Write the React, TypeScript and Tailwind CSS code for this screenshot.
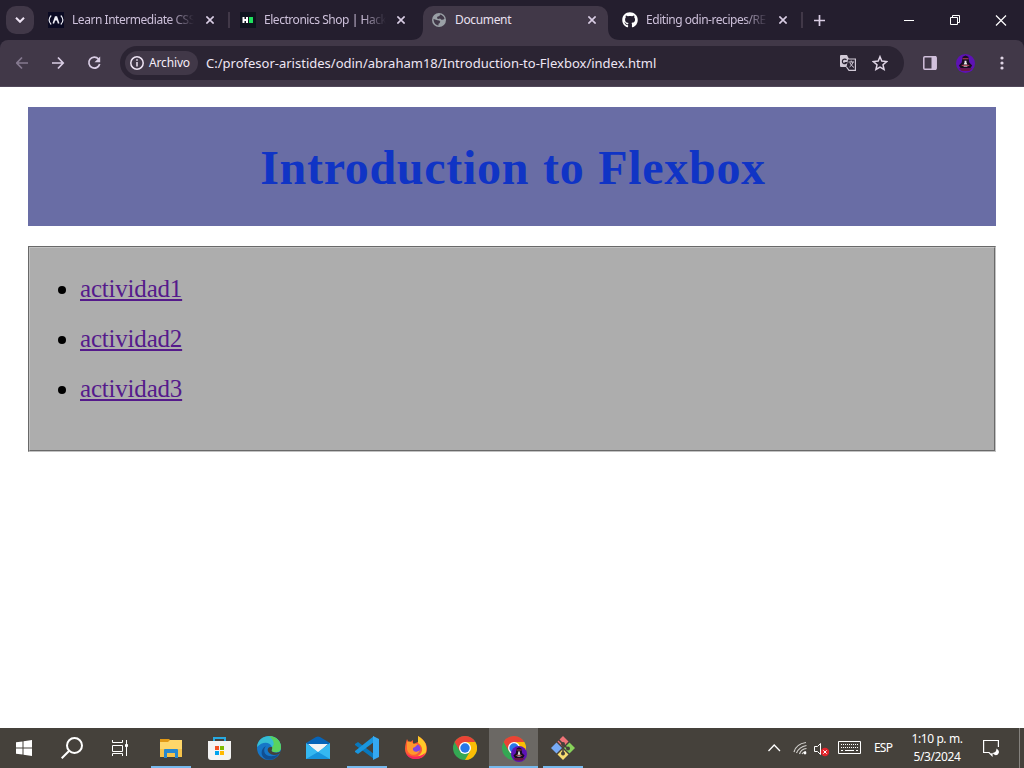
import React from "react";
import { FaGithub } from "react-icons/fa";

function Close() {
  return (
    <svg className="size-2 shrink-0" viewBox="0 0 8 8" stroke="#d9cde4" strokeWidth="1.6">
      <path d="M.4.4l7.2 7.2M7.6.4L.4 7.6" />
    </svg>
  );
}

function FreeCodeCamp() {
  return (
    <svg className="size-4 shrink-0" viewBox="0 0 16 16" fill="none" stroke="#eeeef6">
      <path fill="#0a0a23" stroke="none" d="M0 0h16v16H0z" />
      <path strokeWidth="1.1" d="M3.2 3.5Q-1 8 3.2 12.5M12.8 3.5q4.200 4.500 0 9" />
      <path strokeWidth="1.6" d="M5.300 11.500 7.500 5h1l2.200 6.500" />
      <path fill="#eeeef6" stroke="none" d="M6.500 7.500l1.500-3 1.500 3-.5 1H7z" />
    </svg>
  );
}

function HackerEarth() {
  return (
    <svg className="size-4 shrink-0" viewBox="0 0 16 16">
      <path fill="#0e141e" d="M0 0h16v16H0z" />
      <path fill="#fff" d="M2.500 5h2v2h1.500V5h2v6H6V9H4.500v2h-2z" />
      <path fill="#1ee15e" d="M9 5h4v6H9z" />
    </svg>
  );
}

function Globe() {
  return (
    <svg className="size-[14px] shrink-0" viewBox="0 0 14 14">
      <circle cx="7" cy="7" r="7" fill="#9aa0a6" />
      <path fill="#413848" d="M8 1.500q3.500.7 4.500 4.200-1 1.300-3 1.100L8 5.500 6.200 6 5 5.200l.3-1.500L7.500 3zM1.500 6l4 1.300 1.800.3 1 1.200-.8 1.500-1 .4v1.800C3.500 12 1.500 9.500 1.500 6z" />
    </svg>
  );
}

function TabBody({ icon, title, fade = true }: { icon: React.ReactNode; title: string; fade?: boolean }) {
  return (
    <>
      {icon}
      <span
        className={
          "w-[122px] shrink-0 overflow-hidden whitespace-nowrap text-[12px] leading-5 " +
          (fade
            ? "ml-2 tracking-[-0.46px] text-[#cdc0da] [mask-image:linear-gradient(to_right,black_80%,transparent)]"
            : "ml-[9px] tracking-[-0.35px] text-[#e9e0f0]")
        }
      >
        {title}
      </span>
    </>
  );
}

function TabStrip() {
  return (
    <div className="flex h-10 items-center bg-[#241e2e] pl-1.5">
      <div className="flex size-7 items-center justify-center rounded-[10px] bg-[#413848]">
        <svg className="h-[6px] w-[10px]" viewBox="0 0 10 6" fill="none" stroke="#eee4f4" strokeWidth="2">
          <path d="M1 .8l4 4 4-4" />
        </svg>
      </div>
      <div className="flex w-[195px] items-center pl-3.5">
        <TabBody icon={<FreeCodeCamp />} title="Learn Intermediate CSS" />
        <span className="ml-3"><Close /></span>
        <i className="ml-3.5 h-4 w-[2px] shrink-0 bg-[#413848]" />
      </div>
      <div className="flex w-[182px] items-center pl-[11px]">
        <TabBody icon={<HackerEarth />} title="Electronics Shop | Hack" />
        <span className="ml-[11px]"><Close /></span>
      </div>
      <svg className="h-10 w-3 shrink-0" viewBox="0 0 12 40"><path fill="#413848" d="M0 40Q12 40 12 28V40z" /></svg>
      <div className="flex h-[34px] w-[185px] items-center self-end rounded-t-[10px] bg-[#413848] pb-1.5 pl-[9px]">
        <TabBody icon={<Globe />} title="Document" fade={false} />
        <span className="ml-[11px]"><Close /></span>
      </div>
      <svg className="h-10 w-3 shrink-0" viewBox="0 0 12 40"><path fill="#413848" d="M12 40Q0 40 0 28V40z" /></svg>
      <div className="flex w-[184px] items-center pl-0.5">
        <FaGithub className="size-4 shrink-0 text-white" />
        <TabBody icon={null} title="Editing odin-recipes/RE" />
        <span className="ml-[11px]"><Close /></span>
        <i className="ml-3.5 h-4 w-[2px] shrink-0 bg-[#413848]" />
      </div>
      <svg className="ml-[10px] size-[11px] shrink-0" viewBox="0 0 11 11" stroke="#d9cde4" strokeWidth="1.700"><path d="M5.500 0v11M0 5.500h11" /></svg>
      <svg className="ml-[79px] h-3 w-[104px] shrink-0" viewBox="0 0 104 12" fill="none" stroke="#fff">
        <path d="M0 6.500h10M46.500 3.500h7v7h-7zM48.500 3.500v-2h7v7h-2" />
        <path strokeWidth="1.200" d="M92 1.500l10 10M102 1.500l-10 10" />
      </svg>
    </div>
  );
}

function Avatar({ className }: { className: string }) {
  return (
    <svg className={className} viewBox="0 0 20 20">
      <circle cx="10" cy="10" r="10" fill="#5d12b5" />
      <path fill="#180d20" d="M7 3l3-1.500L13 3l1 6 3 3-2 3H5l-2-3 3-3z" />
      <path fill="#6d1746" d="M3 15h14l-3 3H6z" />
      <path fill="#eee" d="M9 7h2v2l1 2h-4l1-2z" />
      <path stroke="#d25060" strokeWidth=".9" d="M6 12h8M7 5h6" />
      <path stroke="#ddd" strokeWidth=".8" d="M8 13h4" />
    </svg>
  );
}

function Toolbar() {
  return (
    <div className="bg-[#241e2e]">
      <div className="flex h-[47px] items-center rounded-t-[8px] border-b border-[#51485a] bg-[#413848]">
        <svg className="ml-4 h-[14px] w-[86px] shrink-0" viewBox="0 0 86 14" fill="none" strokeWidth="1.700">
          <path stroke="#85798f" d="M12 7H1M6 1.500L.8 7 6 12.500" />
          <path stroke="#d9cde4" d="M36 7h11M42 1.500L47.200 7 42 12.500M82.500 3A5.500 5.500 0 1 0 83.700 8" />
          <path fill="#d9cde4" d="M84.200.5v5.700h-5.700z" />
        </svg>
        <div className="ml-[18px] flex h-[34px] w-[784px] shrink-0 items-center rounded-full bg-[#2b2433] pl-[5px]">
          <div className="flex h-6 w-[73px] items-center rounded-full bg-[#413848] pl-[5px]">
            <svg className="size-[14px]" viewBox="0 0 14 14" fill="none" stroke="#eee4f4" strokeWidth="1.500">
              <circle cx="7" cy="7" r="6.200" />
              <path d="M7 6v4.500M7 3.200v1.500" />
            </svg>
            <span className="ml-[5px] text-[12px] leading-5 tracking-[-0.15px] text-[#f5edf9]">Archivo</span>
          </div>
          <span className="ml-2 w-[460px] whitespace-nowrap text-[13px] leading-5 text-[#eee6f3]">
            C:/profesor-aristides/odin/abraham18/Introduction-to-Flexbox/index.html
          </span>
          <svg className="ml-[174px] size-4 shrink-0" viewBox="0 0 16 16">
            <path fill="#d1c9d6" d="M1 0h6l2 4v8H1q-1 0-1-1V1q0-1 1-1z" />
            <path fill="none" stroke="#2b2433" strokeWidth="1.200" d="M6.500 5A2.300 2.300 0 1 0 6.700 7.500H4.500" />
            <path fill="#2b2433" stroke="#d1c9d6" strokeWidth="1.200" d="M8.200 4H15.400V15.400H9L6.500 12" />
            <path fill="none" stroke="#d1c9d6" d="M8.500 7h5.500M11.200 5.500V7M13 7q-.5 3-3.500 5M10 8q1.500 3 4 4.500" />
          </svg>
          <svg className="ml-4 size-4 shrink-0" viewBox="0 0 16 16" fill="none" stroke="#e0d6e6" strokeWidth="1.500">
            <path d="M8 1.700l1.800 4.400 4.900.5-3.700 3.200 1.100 4.700L8 12.100l-4.100 2.400L5 9.800 1.300 6.600l4.900-.5z" />
          </svg>
        </div>
        <svg className="ml-[19px] h-[14px] w-[14px] shrink-0" viewBox="0 0 14 14">
          <rect x=".8" y=".8" width="12.400" height="12.400" rx="1" fill="none" stroke="#d1c0dc" strokeWidth="1.500" />
          <path fill="#d1c0dc" d="M8.500 0H13v14H8.500z" />
        </svg>
        <Avatar className="ml-[19px] size-[19px] shrink-0" />
        <svg className="ml-[25px] h-[14px] w-[4px] shrink-0" viewBox="0 0 4 14" fill="#dfd5e5">
          <circle cx="2" cy="2" r="1.600" /><circle cx="2" cy="7" r="1.600" /><circle cx="2" cy="12" r="1.600" />
        </svg>
      </div>
    </div>
  );
}

function Page() {
  return (
    <main className="flex flex-1 flex-col gap-5 bg-white px-7 pt-5 font-['Liberation_Serif',serif]">
      <header className="flex h-[119px] items-center justify-center bg-[#696da5] pl-0.5 pt-px">
        <h1 className="whitespace-nowrap text-[48px] font-bold leading-[55px] tracking-[0.7px] [word-spacing:1.2px] text-[#1034c5]">Introduction to Flexbox</h1>
      </header>
      <nav className="h-[206px] border border-b-[#c2c2c2] border-l-[#696969] border-r-[#c2c2c2] border-t-[#696969]">
        <div className="h-full border border-b-[#696969] border-l-[#c2c2c2] border-r-[#696969] border-t-[#c2c2c2] bg-[#adadad] pt-4">
          <ul className="text-[25px]">
            {["actividad1", "actividad2", "actividad3"].map((name) => (
              <li key={name} className="flex h-[50px] items-center pl-7">
                <i className="mr-[14px] mt-px size-2 rounded-full bg-black" />
                <a className="leading-7 tracking-[-0.2px] text-[#551a8b] underline decoration-2 underline-offset-[2px]">{name}</a>
              </li>
            ))}
          </ul>
        </div>
      </nav>
    </main>
  );
}

function ChromeShapes() {
  return (
    <>
      <circle cx="12" cy="12" r="12" fill="#34a853" />
      <path fill="#ea4335" d="M1.600 6A12 12 0 0 1 22.400 6H12L6.800 15z" />
      <path fill="#fbbc05" d="M22.400 6A12 12 0 0 1 12 24L17.200 15 12 6z" />
      <circle cx="12" cy="12" r="6" fill="#fff" />
      <circle cx="12" cy="12" r="4.700" fill="#2777e8" />
    </>
  );
}

const apps: { name: string; state: string; art: React.ReactNode }[] = [
  {
    name: "files", state: "open", art: (
      <>
        <path fill="#e29a16" d="M1 3h9l2 2v4H1z" />
        <path fill="#ffd76a" d="M1 6h8l2-2h12v17H1z" />
        <path fill="#f6c34b" d="M1 13h22v8H1z" />
        <path fill="#2788cf" d="M5 14q0-1 1-1h12q1 0 1 1v8h-3v-5H8v5H5z" />
      </>
    ),
  },
  {
    name: "store", state: "", art: (
      <>
        <path fill="none" stroke="#27a9e1" strokeWidth="2" d="M6 6V2h11v4" />
        <path fill="#f3f3f3" d="M0 5h23v16q0 3-3 3H3q-3 0-3-3z" />
        <path fill="#f25022" d="M7 10h4v4H7z" /><path fill="#7fba00" d="M12 10h4v4h-4z" />
        <path fill="#00a4ef" d="M7 15h4v4H7z" /><path fill="#ffb900" d="M12 15h4v4h-4z" />
      </>
    ),
  },
  {
    name: "edge", state: "", art: (
      <>
        <circle cx="12" cy="12" r="12" fill="#1676c7" />
        <path fill="#35bdd3" d="M0 11C1-3 23-4 24 11c0 5-4 6-8 5-3-1 0-3-1-5C12 5 5 6 0 11z" />
        <path fill="#5ad35d" d="M12 0c7 0 12 5 12 11 0 5-4 6-8 5-3-1 0-3-1-5 3-2 2-7-3-11z" />
        <path fill="#114f91" d="M9 10c-5 6 1 14 13 8-5 8-15 7-17 1-1-3 0-7 4-9z" />
        <path fill="#45413b" d="M13 11c-4 1-3 7 4 8 3 0 5-1 6-2l1-2c-2 2-5 2-8 1-3-1 0-3-1-5z" />
      </>
    ),
  },
  {
    name: "mail", state: "", art: (
      <>
        <path fill="#0764b8" d="M0 7l10-6q2-1 4 0l10 6v8H0z" />
        <path fill="#f4f4f4" d="M2 8h20L12 17z" />
        <path fill="#35b8f1" d="M0 7l12 9 12-9v16H0z" />
        <path fill="#1793dc" d="M0 23l12-7 12 7z" />
      </>
    ),
  },
  {
    name: "code", state: "open", art: (
      <>
        <path fill="#0878bd" d="M0 8l3-2 16 12v5L0 9z" />
        <path fill="#1996df" d="M0 16l3 2L19 6V0L0 15z" />
        <path fill="#35a9f2" d="M18 0l6 3v18l-6 3z" />
      </>
    ),
  },
  {
    name: "firefox", state: "", art: (
      <>
        <path fill="#ff5b32" d="M3 3l2 4 4-3v4l5-2V0c5 3 9 7 9 13 0 6-5 10-11 10S1 19 1 13c0-4 1-7 2-10z" />
        <path fill="#ffc928" d="M14 0c8 5 9 9 8 16-2 4-5 5-8 4 6-4 5-10 0-13z" />
        <circle cx="11.500" cy="13" r="5" fill="#8045e4" />
        <path fill="#ff982d" d="M3 6c3-1 5 0 7 2h4l-3 3-2 1c-1 4 4 5 7 2-2 7-12 6-13-1z" />
        <path fill="#f62760" d="M2 17c5 5 13 5 19 0-3 8-16 8-19 0z" />
      </>
    ),
  },
  { name: "chrome", state: "", art: <ChromeShapes /> },
  { name: "profile", state: "active", art: <ChromeShapes /> },
  {
    name: "git", state: "git", art: (
      <>
        <path fill="#ef7377" d="M12 0l5.500 5.500-5.500 5.500-5.500-5.500z" />
        <path fill="#77aaf6" d="M5.500 6.500L11 12l-5.500 5.500L0 12z" />
        <path fill="#87d25a" d="M18.500 6.500L24 12l-5.500 5.500L13 12z" />
        <path fill="#f8dc70" d="M12 13l5.500 5.500L12 24l-5.500-5.500z" />
        <path fill="none" stroke="#45413b" strokeWidth="1.500" d="M7.500 3.500l4.500 4.500v10M12 8l4.500 4.500" />
        <circle cx="12" cy="8" r="2" fill="#45413b" /><circle cx="17" cy="12.500" r="2" fill="#45413b" /><circle cx="12" cy="17.500" r="2" fill="#45413b" />
      </>
    ),
  },
];

function Taskbar() {
  return (
    <footer className="flex h-10 items-center bg-[#45413b] text-white">
      <svg className="ml-4 size-4 shrink-0" viewBox="0 0 16 16" fill="#fff">
        <path d="M0 2.300l6.500-.9v6H0zM7.500 1.200L16 0v7.400H7.500zM0 8.400h6.500v6.200L0 13.700zM7.500 8.400H16V16l-8.500-1.200z" />
      </svg>
      <svg className="ml-[29px] size-[22px] shrink-0" viewBox="0 0 22 22" fill="none" stroke="#fff" strokeWidth="2">
        <circle cx="13.500" cy="8.500" r="7.500" /><path d="M8 14l-7.300 7.300" />
      </svg>
      <svg className="ml-[29px] h-4 w-4 shrink-0" viewBox="0 0 16 16" fill="none" stroke="#fff">
        <path d="M0.500 0v2.500h10V0M.5 5.500h10v6H.5zM.5 16v-2.500h10V16M14.500 0v16" /><path fill="#fff" d="M13.500 4.500h2v2h-2z" />
      </svg>
      <div className="ml-[18px] flex h-10 shrink-0">
        {apps.map((app) => (
          <div key={app.name} className={"relative flex h-10 w-[49px] flex-col items-center justify-center " + (app.state === "active" ? "bg-[#6b6864]" : "")}>
            <svg className="size-6" viewBox="0 0 24 24">{app.art}</svg>
            {app.state === "active" && <Avatar className="absolute left-[22px] top-[18px] size-4" />}
            {app.state !== "" && <i className={"absolute bottom-0 h-0.5 bg-[#76b9ed] " + (app.state === "active" ? "w-[49px]" : "w-10")} />}
          </div>
        ))}
      </div>
      <svg className="ml-auto h-5 w-[94px] shrink-0" viewBox="0 0 94 20" fill="none" stroke="#fff">
        <path strokeWidth="1.300" d="M.5 13l5.700-6 5.800 6" />
        <path stroke="#d2d0cd" strokeWidth="1.200" d="M26 14Q28 6 38 4.500M28.500 15Q31 9 38.500 7.500M31.500 16Q33 11 38.500 10.500M34 16Q35 14 38 13.500" />
        <circle cx="37" cy="15" r="1.400" fill="#fff" stroke="none" />
        <path d="M46.500 8.500h3l3-3v11l-3-3h-3z" />
        <circle cx="57" cy="14" r="4.200" fill="#e1242b" stroke="none" /><path d="M55.300 12.300l3.400 3.400M58.700 12.300l-3.400 3.400" />
        <path d="M70.500 3.500h22v12h-22z" />
        <path strokeDasharray="1 1" d="M73 6.500h17M73 9.500h17" /><path d="M73 12.500h2M77 12.500h9M88 12.500h2" />
      </svg>
      <span className="ml-3 w-5 whitespace-nowrap text-[12px] tracking-[-0.8px]">ESP</span>
      <div className="ml-3 w-[62px] whitespace-nowrap text-center text-[12px] leading-[18px] tracking-[-0.4px]">
        <div>1:10 p. m.</div><div>5/3/2024</div>
      </div>
      <svg className="ml-[15px] h-[18px] w-[17px] shrink-0" viewBox="0 0 17 18" fill="none" stroke="#fff" strokeWidth="1.200">
        <path d="M15.400 8V1.500H.6v12H6l3 3V14" /><path fill="#fff" stroke="none" d="M13.500 9.500q0 4-4 4.500 2 3 5 1.800 3.500-3-1-6.300z" />
      </svg>
      <i className="ml-[19px] mr-1 h-10 w-px shrink-0 bg-[#85827e]" />
    </footer>
  );
}

export default function App() {
  return (
    <div className="flex h-[768px] w-[1024px] flex-col overflow-hidden font-['Noto_Sans',sans-serif]">
      <TabStrip />
      <Toolbar />
      <Page />
      <Taskbar />
    </div>
  );
}
